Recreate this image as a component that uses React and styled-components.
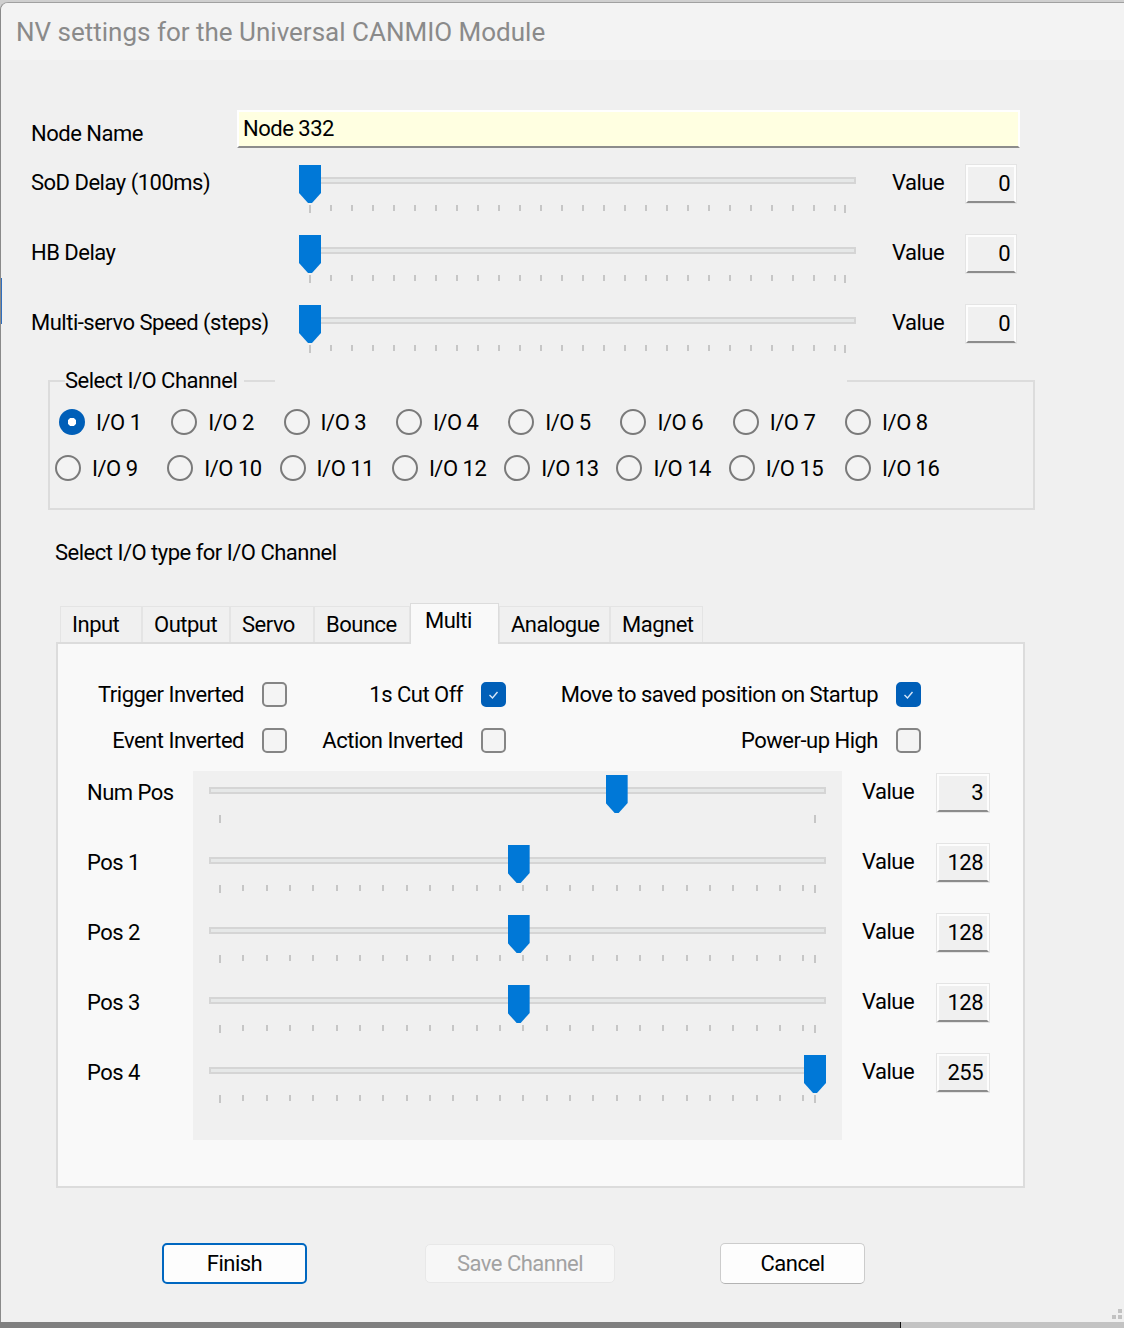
import styled, { createGlobalStyle } from "styled-components";

const GlobalStyle = createGlobalStyle`
  * { box-sizing: border-box; }
  html, body { margin: 0; padding: 0; }
  body {
    width: 1124px;
    height: 1328px;
    overflow: hidden;
    background: #cfcfcf;
    font-family: Roboto, "Liberation Sans", sans-serif;
    color: #000;
  }
`;

const range = (min, max, step) => {
  const out = [];
  for (let v = min; v < max; v += step) out.push(v);
  out.push(max);
  return out;
};

const Slider = ({ width, min = 0, max = 255, value, step = 10, endsOnly }) => {
  const span = width - 22;
  const pos = (v) => 11 + ((v - min) / (max - min)) * span;
  const ticks = endsOnly ? [min, max] : range(min, max, step);
  return (
    <SliderBox $w={width}>
      <Track />
      {ticks.map((t, i) => (
        <Tick key={i} $long={t === min || t === max} style={{ left: pos(t) - 1 }} />
      ))}
      <Thumb style={{ left: pos(value) - 11 }} />
    </SliderBox>
  );
};

const Check = ({ checked }) => (
  <CheckBox $checked={checked}>
    {checked && (
      <svg width="21" height="21" viewBox="0 0 21 21">
        <path d="M6.5 11 L9.5 14 L14.5 8" fill="none" stroke="#d6e6f7" strokeWidth="1.4" />
      </svg>
    )}
  </CheckBox>
);

const topSliders = [
  { label: "SoD Delay (100ms)", value: 0 },
  { label: "HB Delay", value: 0 },
  { label: "Multi-servo Speed (steps)", value: 0 },
];

const posSliders = [
  { label: "Num Pos", value: 3, min: 1, max: 4, endsOnly: true },
  { label: "Pos 1", value: 128 },
  { label: "Pos 2", value: 128 },
  { label: "Pos 3", value: 128 },
  { label: "Pos 4", value: 255 },
];

const tabs = [
  { name: "Input", w: 82 },
  { name: "Output", w: 88 },
  { name: "Servo", w: 84 },
  { name: "Bounce", w: 96 },
  { name: "Multi", w: 89, active: true },
  { name: "Analogue", w: 111 },
  { name: "Magnet", w: 93 },
];

const App = () => {
  return (
    <Desktop>
      <GlobalStyle />
      <Window>
        <TitleBar>NV settings for the Universal CANMIO Module</TitleBar>
        <Body>
          <NodeRow>
            <NodeLabel>Node Name</NodeLabel>
            <NameInput readOnly value="Node 332" />
          </NodeRow>

          <SliderList>
            {topSliders.map((s) => (
              <SliderRow key={s.label}>
                <RowLabel $w={268}>{s.label}</RowLabel>
                <Slider width={557} value={s.value} />
                <ValueLabel $ml={36} $w={74}>Value</ValueLabel>
                <ValueBox $w={50}>{s.value}</ValueBox>
              </SliderRow>
            ))}
          </SliderList>

          <GroupBox>
            <Legend>
              <LegendInner>
                <span>Select I/O Channel</span>
                <LegendLine />
              </LegendInner>
            </Legend>
            <RadioRow $offset={9}>
              {[1, 2, 3, 4, 5, 6, 7, 8].map((n) => (
                <RadioItem key={n}>
                  <RadioCircle $on={n === 1} />
                  I/O {n}
                </RadioItem>
              ))}
            </RadioRow>
            <RadioRow $offset={5}>
              {[9, 10, 11, 12, 13, 14, 15, 16].map((n) => (
                <RadioItem key={n} $nudge={n === 16 ? 4 : 0}>
                  <RadioCircle />
                  I/O {n}
                </RadioItem>
              ))}
            </RadioRow>
          </GroupBox>

          <TypeLabel>Select I/O type for I/O Channel</TypeLabel>

          <TabStrip>
            {tabs.map((t) => (
              <Tab key={t.name} $w={t.w} $active={t.active}>
                {t.name}
              </Tab>
            ))}
          </TabStrip>
          <Panel>
            <CheckGrid>
              <CheckLabel>Trigger Inverted</CheckLabel>
              <Check />
              <CheckLabel>1s Cut Off</CheckLabel>
              <Check checked />
              <CheckLabel>Move to saved position on Startup</CheckLabel>
              <Check checked />
              <CheckLabel>Event Inverted</CheckLabel>
              <Check />
              <CheckLabel>Action Inverted</CheckLabel>
              <Check />
              <CheckLabel>Power-up High</CheckLabel>
              <Check />
            </CheckGrid>

            <PosSection>
              <PosLabels>
                {posSliders.map((s) => (
                  <PosRow key={s.label}>
                    <RowLabel>{s.label}</RowLabel>
                  </PosRow>
                ))}
              </PosLabels>
              <PosGroup>
                {posSliders.map((s) => (
                  <PosRow key={s.label}>
                    <Slider
                      width={617}
                      value={s.value}
                      min={s.min}
                      max={s.max}
                      endsOnly={s.endsOnly}
                    />
                  </PosRow>
                ))}
              </PosGroup>
              <PosValues>
                {posSliders.map((s) => (
                  <PosRow key={s.label}>
                    <ValueLabel $w={75}>Value</ValueLabel>
                    <ValueBox $w={52}>{s.value}</ValueBox>
                  </PosRow>
                ))}
              </PosValues>
            </PosSection>
          </Panel>

          <ButtonBar>
            <Button $variant="default" $w={145}>Finish</Button>
            <Button $variant="disabled" $w={190} $ml={118}>Save Channel</Button>
            <Button $w={145} $ml={105}>Cancel</Button>
          </ButtonBar>
        </Body>
        <Grip>
          <svg width="10" height="10" viewBox="0 0 10 10">
            <rect x="6" y="0" width="4" height="4" fill="#c2c2c2" />
            <rect x="0" y="6" width="4" height="4" fill="#c2c2c2" />
            <rect x="6" y="6" width="4" height="4" fill="#c2c2c2" />
          </svg>
        </Grip>
      </Window>
      <BottomBar />
    </Desktop>
  );
};

export default App;

const Desktop = styled.div`
  display: flex;
  flex-direction: column;
  height: 1328px;
  padding-top: 2px;
`;

const Window = styled.div`
  position: relative;
  flex: 1;
  display: flex;
  flex-direction: column;
  background: #f0f0f0;
  border-left: 1px solid #8a8a8a;
  border-top: 1px solid #a0a0a0;
  border-top-left-radius: 8px;
  overflow: hidden;
  font-size: 22px;
  letter-spacing: -0.5px;

  &::before {
    content: "";
    position: absolute;
    left: 0;
    top: 275px;
    width: 1px;
    height: 46px;
    background: #2f6fbf;
  }
`;

const TitleBar = styled.div`
  height: 57px;
  display: flex;
  align-items: center;
  padding-left: 15px;
  background: #f3f3f3;
  color: #8a8a8a;
  font-size: 26px;
  letter-spacing: 0;
`;

const Body = styled.div`
  padding-left: 30px;
`;

const NodeRow = styled.div`
  display: flex;
  align-items: flex-end;
  height: 38px;
  margin-top: 50px;
`;

const NodeLabel = styled.div`
  width: 206px;
  line-height: 28px;
`;

const NameInput = styled.input`
  width: 783px;
  height: 38px;
  padding: 0 4px 2px;
  background: #ffffe1;
  border: 2px solid #ffffff;
  border-bottom-color: #8c8c8c;
  outline: none;
  font: inherit;
  letter-spacing: inherit;
  color: #000;
`;

const SliderList = styled.div`
  display: flex;
  flex-direction: column;
  gap: 7px;
  margin-top: 17px;
`;

const SliderRow = styled.div`
  display: flex;
  align-items: flex-start;
  height: 63px;
`;

const RowLabel = styled.div`
  width: ${(p) => (p.$w ? `${p.$w}px` : "auto")};
  line-height: 36px;
  white-space: nowrap;
`;

const ValueLabel = styled.div`
  width: ${(p) => p.$w}px;
  margin-left: ${(p) => p.$ml || 0}px;
  line-height: 36px;
`;

const ValueBox = styled.div`
  width: ${(p) => p.$w}px;
  height: 38px;
  padding-right: 4px;
  background: #f0f0f0;
  border: 2px solid #fdfdfd;
  border-bottom-color: #8c8c8c;
  box-shadow: 0 0 0 1px #e4e4e4;
  text-align: right;
  line-height: 33px;
`;

const SliderBox = styled.div`
  position: relative;
  width: ${(p) => p.$w}px;
  height: 50px;
  padding-top: 12px;
`;

const Track = styled.div`
  height: 7px;
  background: #e6e8e8;
  border: 2px solid #d5d5d5;
`;

const Tick = styled.div`
  position: absolute;
  top: 40px;
  width: 2px;
  height: ${(p) => (p.$long ? 8 : 6)}px;
  background: #c6c6c6;
`;

const Thumb = styled.div`
  position: absolute;
  top: 0;
  width: 22px;
  height: 38px;
  background: #0078d7;
  clip-path: polygon(0 0, 100% 0, 100% 28px, 13px 100%, 9px 100%, 0 28px);
`;

const GroupBox = styled.fieldset`
  width: 987px;
  margin: 0 0 0 17px;
  padding: 5px 0 17px;
  border: 2px solid #dcdcdc;
  min-width: 0;
`;

const Legend = styled.legend`
  padding: 0;
  margin-left: 15px;
  width: 782px;
  line-height: 26px;
`;

const LegendInner = styled.span`
  display: flex;
  align-items: center;
`;

const LegendLine = styled.span`
  width: 31px;
  height: 2px;
  margin-left: 7px;
  background: #dcdcdc;
`;

const RadioRow = styled.div`
  display: grid;
  grid-template-columns: repeat(8, 112.3px);
  height: 46px;
  align-items: center;
  margin-left: ${(p) => p.$offset}px;
`;

const RadioItem = styled.div`
  display: flex;
  align-items: center;
  gap: 11px;
  margin-left: ${(p) => p.$nudge || 0}px;
  white-space: nowrap;
`;

const RadioCircle = styled.span`
  width: 26px;
  height: 26px;
  flex-shrink: 0;
  border-radius: 50%;
  ${(p) =>
    p.$on
      ? `background: radial-gradient(circle, #ffffff 0 4px, #005fb8 4.5px);`
      : `background: #f3f3f3; border: 2px solid #7a7a7a;`}
`;

const TypeLabel = styled.div`
  margin: 30px 0 0 24px;
  line-height: 26px;
`;

const TabStrip = styled.div`
  display: flex;
  align-items: flex-end;
  height: 39px;
  margin: 37px 0 0 25px;
  padding-left: 4px;
`;

const Tab = styled.div`
  position: relative;
  width: ${(p) => p.$w}px;
  height: ${(p) => (p.$active ? 41 : 36)}px;
  margin-bottom: ${(p) => (p.$active ? -2 : 0)}px;
  z-index: ${(p) => (p.$active ? 1 : 0)};
  padding: ${(p) => (p.$active ? "0 0 8px 14px" : "0 0 0 11px")};
  display: flex;
  align-items: center;
  background: ${(p) => (p.$active ? "#f9f9f9" : "#f0f0f0")};
  border: 1px solid ${(p) => (p.$active ? "#dcdcdc" : "#e4e4e4")};
  border-bottom: none;
`;

const Panel = styled.div`
  width: 969px;
  height: 546px;
  margin-left: 25px;
  padding-top: 27px;
  background: #f9f9f9;
  border: 2px solid #dcdcdc;
`;

const CheckGrid = styled.div`
  display: grid;
  grid-template-columns: 186px 43px 176px 43px 372px 43px;
  grid-auto-rows: 46px;
  align-items: center;
`;

const CheckLabel = styled.div`
  text-align: right;
  white-space: nowrap;
`;

const CheckBox = styled.span`
  justify-self: end;
  width: 25px;
  height: 25px;
  display: flex;
  align-items: center;
  justify-content: center;
  border-radius: 5px;
  background: ${(p) => (p.$checked ? "#005fb8" : "#f4f4f4")};
  border: 2px solid ${(p) => (p.$checked ? "#005fb8" : "#858585")};
`;

const PosSection = styled.div`
  display: flex;
  margin-top: 8px;
  padding-left: 29px;
`;

const PosLabels = styled.div`
  width: 106px;
  padding-top: 4px;
`;

const PosGroup = styled.div`
  width: 649px;
  padding: 4px 0 15px 16px;
  background: #f0f0f0;
`;

const PosValues = styled.div`
  margin-left: 20px;
  padding-top: 3px;
`;

const PosRow = styled.div`
  display: flex;
  align-items: flex-start;
  height: 70px;
`;

const ButtonBar = styled.div`
  display: flex;
  margin-top: 55px;
  padding-left: 131px;
`;

const Button = styled.button`
  width: ${(p) => p.$w}px;
  height: ${(p) => (p.$variant === "disabled" ? 39 : 41)}px;
  margin-left: ${(p) => p.$ml || 0}px;
  margin-top: ${(p) => (p.$variant === "disabled" ? 1 : 0)}px;
  font: inherit;
  letter-spacing: inherit;
  border-radius: 5px;
  background: ${(p) => (p.$variant === "disabled" ? "#f7f7f7" : "#fdfdfd")};
  color: ${(p) => (p.$variant === "disabled" ? "#a2a2a2" : "#000")};
  border: ${(p) =>
    p.$variant === "default"
      ? "2px solid #0067c0"
      : p.$variant === "disabled"
      ? "1px solid #e8e8e8"
      : "1px solid #cccccc"};
  border-bottom-color: ${(p) => (p.$variant ? undefined : "#b3b3b3")};
`;

const Grip = styled.div`
  position: absolute;
  right: 2px;
  bottom: 3px;
  line-height: 0;
`;

const BottomBar = styled.div`
  height: 6px;
  flex-shrink: 0;
  background: linear-gradient(to right, #7f7f7f 900px, #111 900px 901px, #c3c3c3 901px);
`;
